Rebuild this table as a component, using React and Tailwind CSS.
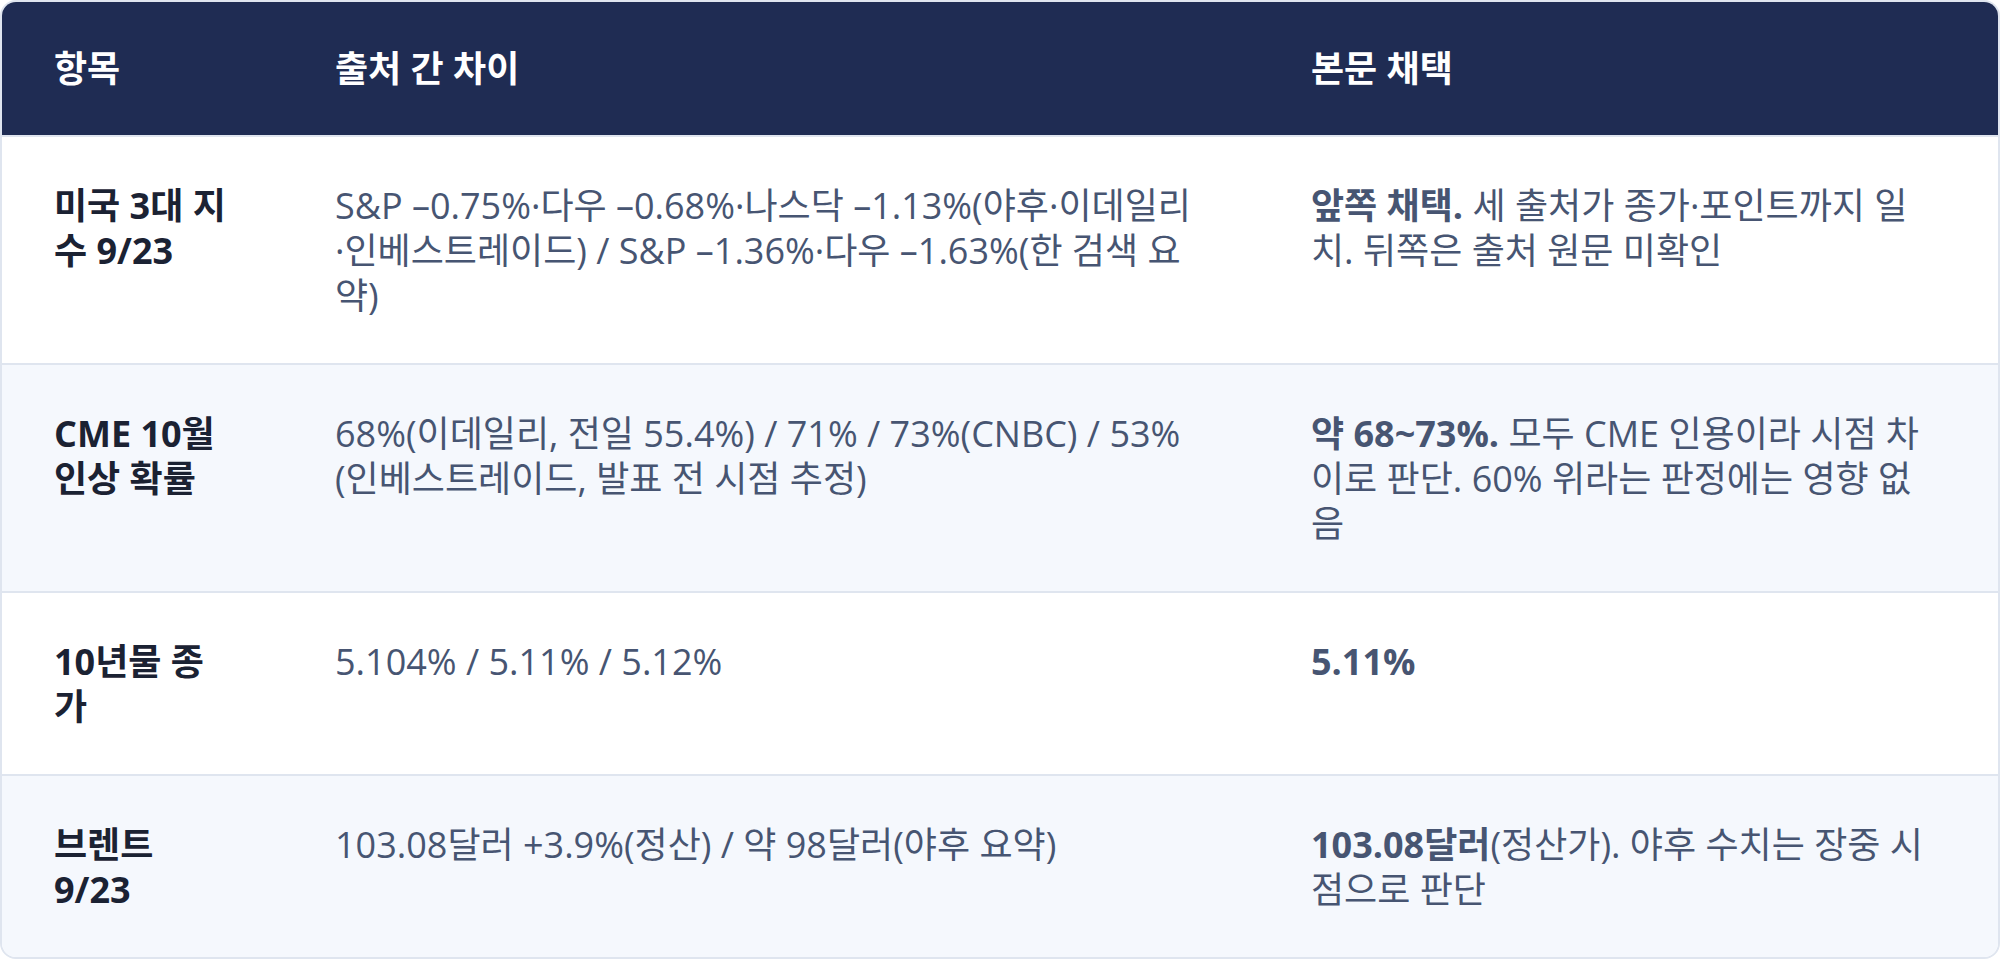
// Each cell is listed line by line, as it wraps in the source layout.
const rows = [
  {
    item: ["미국 3대 지", "수 9/23"],
    diff: [
      "S&P –0.75%·다우 –0.68%·나스닥 –1.13%(야후·이데일리",
      "·인베스트레이드) / S&P –1.36%·다우 –1.63%(한 검색 요",
      "약)",
    ],
    pick: [
      [{ b: "앞쪽 채택." }, " 세 출처가 종가·포인트까지 일"],
      ["치. 뒤쪽은 출처 원문 미확인"],
    ],
  },
  {
    item: ["CME 10월", "인상 확률"],
    diff: [
      "68%(이데일리, 전일 55.4%) / 71% / 73%(CNBC) / 53%",
      "(인베스트레이드, 발표 전 시점 추정)",
    ],
    pick: [
      [{ b: "약 68~73%." }, " 모두 CME 인용이라 시점 차"],
      ["이로 판단. 60% 위라는 판정에는 영향 없"],
      ["음"],
    ],
  },
  {
    item: ["10년물 종", "가"],
    diff: ["5.104% / 5.11% / 5.12%"],
    pick: [[{ b: "5.11%" }]],
  },
  {
    item: ["브렌트", "9/23"],
    diff: ["103.08달러 +3.9%(정산) / 약 98달러(야후 요약)"],
    pick: [
      [{ b: "103.08달러" }, "(정산가). 야후 수치는 장중 시"],
      ["점으로 판단"],
    ],
  },
];

const cols = "grid grid-cols-[281px_976px_1fr]";
const cell = "px-[52px] py-[45.5px]";

function Lines({ lines }) {
  return lines.map((line, i) => (
    <div key={i} className="whitespace-nowrap">
      {line}
    </div>
  ));
}

export default function App() {
  return (
    <div
      className="w-[2000px] h-[960px] bg-white"
      style={{ fontFamily: "'Open Sans', 'Noto Sans CJK KR', sans-serif" }}
    >
      <div className="border-2 border-[#dfe5ef] rounded-2xl overflow-hidden text-[36px] leading-[45px]">
        {/* Header */}
        <div className={`${cols} bg-[#1f2c53] text-white font-bold`}>
          <div className="px-[52px] py-[44px]">항목</div>
          <div className="px-[52px] py-[44px]">출처 간 차이</div>
          <div className="px-[52px] py-[44px]">본문 채택</div>
        </div>

        {rows.map((r, i) => (
          <div
            key={i}
            className={`${cols} border-t-2 border-[#dfe5ef] ${i % 2 === 1 ? "bg-[#f5f8fd]" : "bg-white"}`}
          >
            <div className={`${cell} font-bold text-[#1b2233]`}>
              <Lines lines={r.item} />
            </div>
            <div className={`${cell} text-[#475572]`}>
              <Lines lines={r.diff} />
            </div>
            <div className={`${cell} text-[#475572]`}>
              {r.pick.map((parts, j) => (
                <div key={j} className="whitespace-nowrap">
                  {parts.map((p, k) =>
                    typeof p === "string" ? (
                      <span key={k}>{p}</span>
                    ) : (
                      <span key={k} className="font-bold">
                        {p.b}
                      </span>
                    )
                  )}
                </div>
              ))}
            </div>
          </div>
        ))}
      </div>
    </div>
  );
}
